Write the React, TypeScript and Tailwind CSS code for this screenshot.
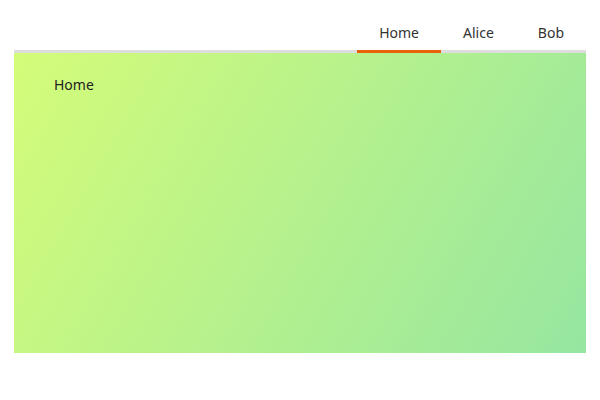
import React from "react";

export default function App() {
  const tabs = ["Home", "Alice", "Bob"];
  return (
    <div className="w-[600px] h-[400px] bg-white p-[14px]" style={{ fontFamily: '"Noto Sans", sans-serif' }}>
      <div className="flex justify-end border-b-[3px] border-[#dddddd] h-[39px]">
        {tabs.map((t, i) => (
          <div
            key={t}
            className={`h-[39px] px-[22px] flex items-center text-[14px] text-[#333333] border-b-[3px] -mb-[3px] ${
              i === 0 ? "border-[#e8620c]" : "border-transparent"
            }`}
          >
            {t}
          </div>
        ))}
      </div>
      <div className="h-[300px] bg-[linear-gradient(120deg,#d4fc79,#96e6a1)] pl-[40px] pt-[22px]">
        <div className="text-[14px] leading-[20px] text-[#222222]">Home</div>
      </div>
    </div>
  );
}
